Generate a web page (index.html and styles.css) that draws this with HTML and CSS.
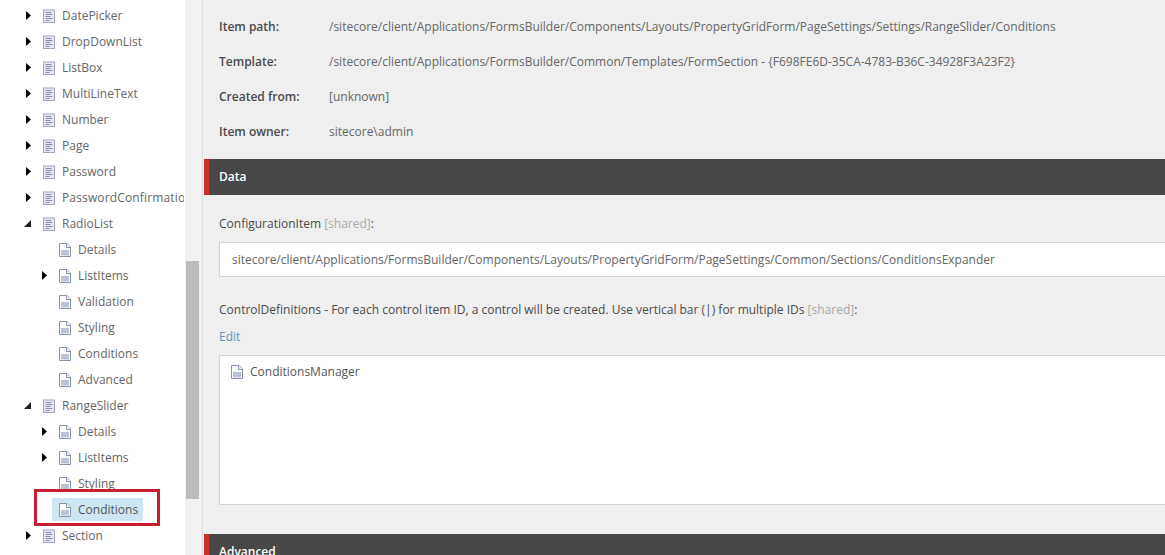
FILE: index.html
```html
<!DOCTYPE html>
<html lang="en">
<head>
    <meta charset="UTF-8">
    <meta name="viewport" content="width=device-width, initial-scale=1.0">
    <title>Content Editor</title>
    <link rel="stylesheet" href="styles.css">
</head>
<body>

    <svg class="icon-defs" width="0" height="0">
        <symbol id="icon-template" viewBox="0 0 12 14">
            <rect x="0.5" y="1" width="11" height="12.5" fill="#e8e8f4" stroke="#a3a3c4"/>
            <path d="M2.5 3.5H8.5M2.5 5.5H9.5M2.5 7.5H7.5M2.5 9.5H9.5M2.5 11.5H6.5" stroke="#8b8bab" fill="none"/>
        </symbol>
        <symbol id="icon-page" viewBox="0 0 12 14">
            <path d="M0.5 0.5H8L11.5 4V13.5H0.5Z" fill="#fdfdfe" stroke="#8793aa"/>
            <path d="M7.5 0.5V4.5H11.5" fill="#eef1f6" stroke="#8793aa"/>
            <rect x="2" y="7" width="8" height="5.5" fill="#b9c4d8"/>
        </symbol>
        <symbol id="arrow-right" viewBox="0 0 5 9">
            <path d="M0 0L5 4.5L0 9Z" fill="#000"/>
        </symbol>
        <symbol id="arrow-open" viewBox="0 0 7 7">
            <path d="M7 0V7H0Z" fill="#222"/>
        </symbol>
    </svg>

    <div class="page">
        <div class="tree">
            <div class="tree-row"><svg class="arrow"><use href="#arrow-right"/></svg><svg class="icon"><use href="#icon-template"/></svg><span>DatePicker</span></div>
            <div class="tree-row"><svg class="arrow"><use href="#arrow-right"/></svg><svg class="icon"><use href="#icon-template"/></svg><span>DropDownList</span></div>
            <div class="tree-row"><svg class="arrow"><use href="#arrow-right"/></svg><svg class="icon"><use href="#icon-template"/></svg><span>ListBox</span></div>
            <div class="tree-row"><svg class="arrow"><use href="#arrow-right"/></svg><svg class="icon"><use href="#icon-template"/></svg><span>MultiLineText</span></div>
            <div class="tree-row"><svg class="arrow"><use href="#arrow-right"/></svg><svg class="icon"><use href="#icon-template"/></svg><span>Number</span></div>
            <div class="tree-row"><svg class="arrow"><use href="#arrow-right"/></svg><svg class="icon"><use href="#icon-template"/></svg><span>Page</span></div>
            <div class="tree-row"><svg class="arrow"><use href="#arrow-right"/></svg><svg class="icon"><use href="#icon-template"/></svg><span>Password</span></div>
            <div class="tree-row clipped"><svg class="arrow"><use href="#arrow-right"/></svg><svg class="icon"><use href="#icon-template"/></svg><span>PasswordConfirmation</span></div>
            <div class="tree-row"><svg class="arrow arrow-down"><use href="#arrow-open"/></svg><svg class="icon"><use href="#icon-template"/></svg><span>RadioList</span></div>
            <div class="tree-row child"><span class="no-arrow"></span><svg class="icon"><use href="#icon-page"/></svg><span>Details</span></div>
            <div class="tree-row child"><svg class="arrow"><use href="#arrow-right"/></svg><svg class="icon"><use href="#icon-page"/></svg><span>ListItems</span></div>
            <div class="tree-row child"><span class="no-arrow"></span><svg class="icon"><use href="#icon-page"/></svg><span>Validation</span></div>
            <div class="tree-row child"><span class="no-arrow"></span><svg class="icon"><use href="#icon-page"/></svg><span>Styling</span></div>
            <div class="tree-row child"><span class="no-arrow"></span><svg class="icon"><use href="#icon-page"/></svg><span>Conditions</span></div>
            <div class="tree-row child"><span class="no-arrow"></span><svg class="icon"><use href="#icon-page"/></svg><span>Advanced</span></div>
            <div class="tree-row"><svg class="arrow arrow-down"><use href="#arrow-open"/></svg><svg class="icon"><use href="#icon-template"/></svg><span>RangeSlider</span></div>
            <div class="tree-row child"><svg class="arrow"><use href="#arrow-right"/></svg><svg class="icon"><use href="#icon-page"/></svg><span>Details</span></div>
            <div class="tree-row child"><svg class="arrow"><use href="#arrow-right"/></svg><svg class="icon"><use href="#icon-page"/></svg><span>ListItems</span></div>
            <div class="tree-row child"><span class="no-arrow"></span><svg class="icon"><use href="#icon-page"/></svg><span>Styling</span></div>
            <div class="tree-row child"><span class="no-arrow"></span><div class="selected"><svg class="icon"><use href="#icon-page"/></svg><span>Conditions</span></div></div>
            <div class="tree-row"><svg class="arrow"><use href="#arrow-right"/></svg><svg class="icon"><use href="#icon-template"/></svg><span>Section</span></div>
            <div class="highlight-box"></div>
        </div>

        <div class="scrollbar"><div class="scroll-thumb"></div></div>

        <div class="content">
            <div class="info">
                <div class="info-row"><span class="info-label">Item path:</span><span>/sitecore/client/Applications/FormsBuilder/Components/Layouts/PropertyGridForm/PageSettings/Settings/RangeSlider/Conditions</span></div>
                <div class="info-row"><span class="info-label">Template:</span><span>/sitecore/client/Applications/FormsBuilder/Common/Templates/FormSection - {F698FE6D-35CA-4783-B36C-34928F3A23F2}</span></div>
                <div class="info-row"><span class="info-label">Created from:</span><span>[unknown]</span></div>
                <div class="info-row"><span class="info-label">Item owner:</span><span>sitecore\admin</span></div>
            </div>

            <div class="section-head">Data</div>

            <div class="section-body">
                <div class="field-label">ConfigurationItem <span class="shared">[shared]</span>:</div>
                <div class="input-box">sitecore/client/Applications/FormsBuilder/Components/Layouts/PropertyGridForm/PageSettings/Common/Sections/ConditionsExpander</div>
                <div class="field-label second">ControlDefinitions - For each control item ID, a control will be created. Use vertical bar (|) for multiple IDs <span class="shared">[shared]</span>:</div>
                <a class="edit-link" href="#">Edit</a>
                <div class="list-box">
                    <div class="list-item"><svg class="icon"><use href="#icon-page"/></svg><span>ConditionsManager</span></div>
                </div>
            </div>

            <div class="section-head">Advanced</div>
        </div>
    </div>

</body>
</html>
```

FILE: styles.css
```css
* { box-sizing: border-box; margin: 0; padding: 0; }

html, body {
    height: 100%;
    overflow: hidden;
}

body {
    font-family: 'Open Sans', 'Liberation Sans', sans-serif;
    font-size: 12px;
    color: #666;
    background-color: #fff;
}

.icon-defs {
    position: absolute;
}

.page {
    display: flex;
    height: 100vh;
}

/* tree */
.tree {
    position: relative;
    flex: 0 0 185px;
    padding-top: 2px;
    overflow: hidden;
    background-color: #fff;
}

.tree-row {
    display: flex;
    align-items: center;
    height: 26px;
    padding-left: 26px;
    white-space: nowrap;
}

.tree-row.child {
    padding-left: 42px;
}

.tree-row.clipped {
    width: 184px;
    overflow: hidden;
    letter-spacing: 0.15px;
}

.arrow, .no-arrow {
    flex: 0 0 5px;
    width: 5px;
    height: 9px;
    margin-right: 12px;
}

.arrow-down {
    flex-basis: 7px;
    width: 7px;
    height: 7px;
    margin-left: -2px;
}

.icon {
    flex: 0 0 12px;
    width: 12px;
    height: 14px;
    margin-top: 2px;
    margin-right: 7px;
}

.selected {
    display: flex;
    align-items: center;
    height: 23px;
    width: 91px;
    margin-left: -7px;
    padding-left: 7px;
    background-color: #cde6f2;
    color: #555;
}

.highlight-box {
    position: absolute;
    left: 34px;
    top: 489px;
    width: 126px;
    height: 37px;
    border: 3px solid #c8202f;
}

/* scrollbar */
.scrollbar {
    flex: 0 0 18px;
    padding: 261px 3px 0 1px;
    background-color: #f1f1f1;
    border-right: 1px solid #ddd;
}

.scroll-thumb {
    height: 238px;
    background-color: #bcbcbc;
}

/* right side */
.content {
    flex: 1;
    min-width: 0;
    overflow: hidden;
    background-color: #efefef;
    padding-left: 1px;
}

.info {
    padding: 9.6px 0 0 15px;
    height: 159px;
}

.info-row {
    display: flex;
    align-items: center;
    height: 34.7px;
    white-space: nowrap;
}

.info-label {
    flex: 0 0 110px;
    font-weight: 600;
    color: #4a4a4a;
}

.section-head {
    height: 36px;
    line-height: 36px;
    padding-left: 10px;
    border-left: 5px solid #c9302c;
    background-color: #474747;
    color: #fff;
    font-weight: 600;
}

.section-body {
    height: 339px;
    padding: 20px 0 0 15px;
}

.field-label {
    height: 18px;
    line-height: 18px;
    color: #4a4a4a;
    white-space: nowrap;
}

.field-label.second {
    margin-top: 24px;
}

.shared {
    color: #aaa;
}

.input-box {
    height: 35px;
    line-height: 33px;
    margin-top: 9px;
    padding-left: 12px;
    width: 960px;
    background-color: #fff;
    border: 1px solid #d4d4d4;
    white-space: nowrap;
}

.edit-link {
    display: block;
    margin-top: 9px;
    height: 18px;
    line-height: 18px;
    color: #5b97b8;
    text-decoration: none;
}

.list-box {
    height: 150px;
    width: 960px;
    margin-top: 9px;
    padding: 6px 11px;
    background-color: #fff;
    border: 1px solid #d4d4d4;
}

.list-item {
    display: flex;
    align-items: center;
    height: 18px;
    color: #555;
}
```
